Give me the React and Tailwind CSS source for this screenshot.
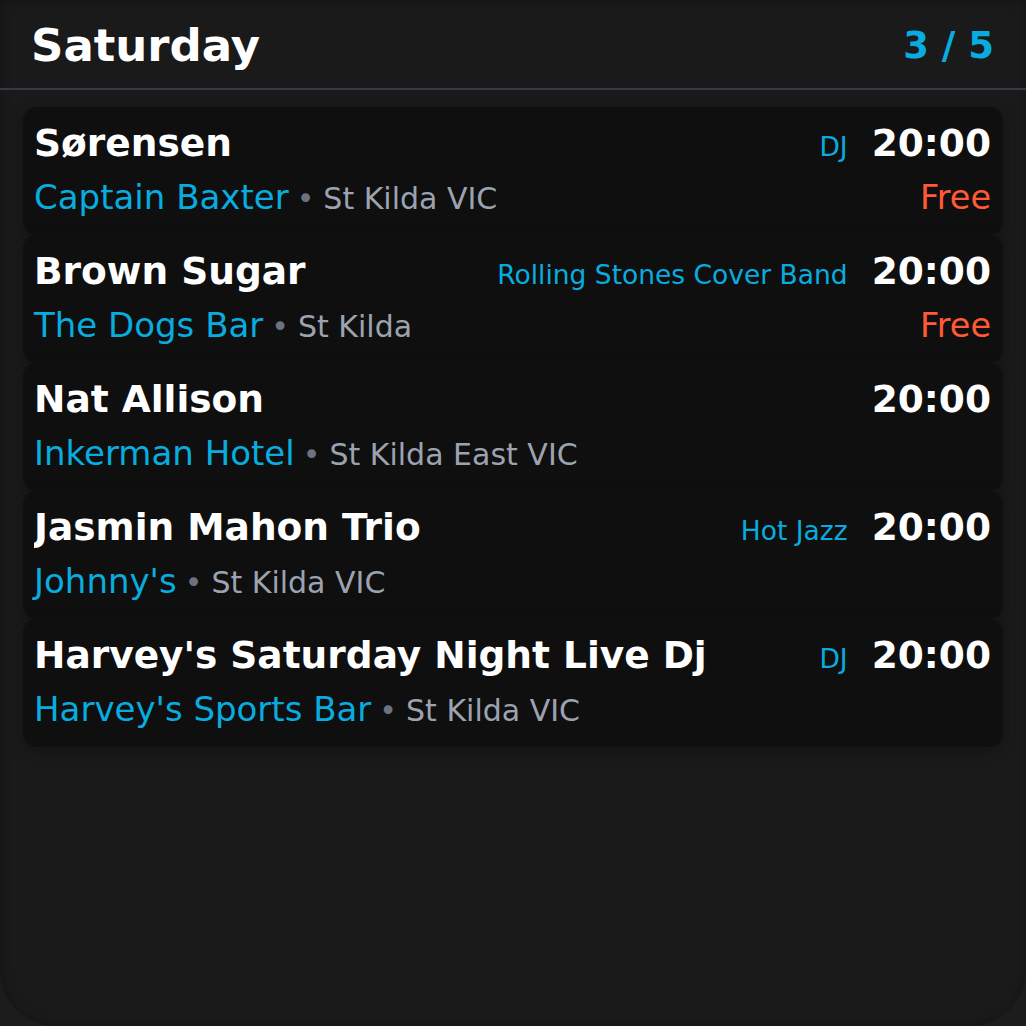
const events = [
  { title: "Sørensen", tag: "DJ", time: "20:00", venue: "Captain Baxter", suburb: "St Kilda VIC", free: true },
  { title: "Brown Sugar", tag: "Rolling Stones Cover Band", time: "20:00", venue: "The Dogs Bar", suburb: "St Kilda", free: true },
  { title: "Nat Allison", tag: "", time: "20:00", venue: "Inkerman Hotel", suburb: "St Kilda East VIC", free: false },
  { title: "Jasmin Mahon Trio", tag: "Hot Jazz", time: "20:00", venue: "Johnny's", suburb: "St Kilda VIC", free: false },
  { title: "Harvey's Saturday Night Live Dj", tag: "DJ", time: "20:00", venue: "Harvey's Sports Bar", suburb: "St Kilda VIC", free: false },
];

function EventCard({ ev }) {
  return (
    <div className="h-[128px] rounded-[14px] bg-[#0f0f0f] pl-[11px] pr-[12px] pt-[14px] shadow-[0_4px_14px_rgba(0,0,0,0.25)]">
      <div className="flex h-[44px] items-baseline">
        <span className="flex-1 truncate text-[37.5px] font-bold leading-[44px] text-white">{ev.title}</span>
        {ev.tag && <span className="ml-4 text-[26.5px] leading-[44px] text-[#09acdf]">{ev.tag}</span>}
        <span className="ml-[24px] text-[37.5px] font-bold leading-[44px] text-white">{ev.time}</span>
      </div>
      <div className="mt-[12px] flex h-[40px] items-baseline">
        <div className="flex flex-1 items-baseline">
          <span className="text-[34px] leading-[40px] text-[#09acdf]">{ev.venue}</span>
          <span className="ml-[8px] text-[30px] leading-[40px] text-[#6b7280]">•</span>
          <span className="ml-[9px] text-[30px] leading-[40px] text-[#9ca3af]">{ev.suburb}</span>
        </div>
        {ev.free && <span className="text-[33.5px] leading-[40px] text-[#ff5a36]">Free</span>}
      </div>
    </div>
  );
}

export default function App() {
  return (
    <div className="h-[1026px] w-[1026px] bg-[#1c1c1c] font-['DejaVu_Sans',sans-serif]">
      <div className="h-full rounded-b-[56px] bg-[#1a1a1a] shadow-[inset_0_0_12px_rgba(0,0,0,0.25)]">
        <div className="flex h-[90px] items-center justify-between border-b-2 border-[#353b45] pl-[31px] pr-[32px] pt-[4px]">
          <span className="text-[45px] font-bold text-white">Saturday</span>
          <span className="text-[37px] font-bold text-[#09acdf]">3 / 5</span>
        </div>
        <div className="flex flex-col px-[23px] pt-[17px]">
          {events.map((ev) => (
            <EventCard key={ev.title} ev={ev} />
          ))}
        </div>
      </div>
    </div>
  );
}
